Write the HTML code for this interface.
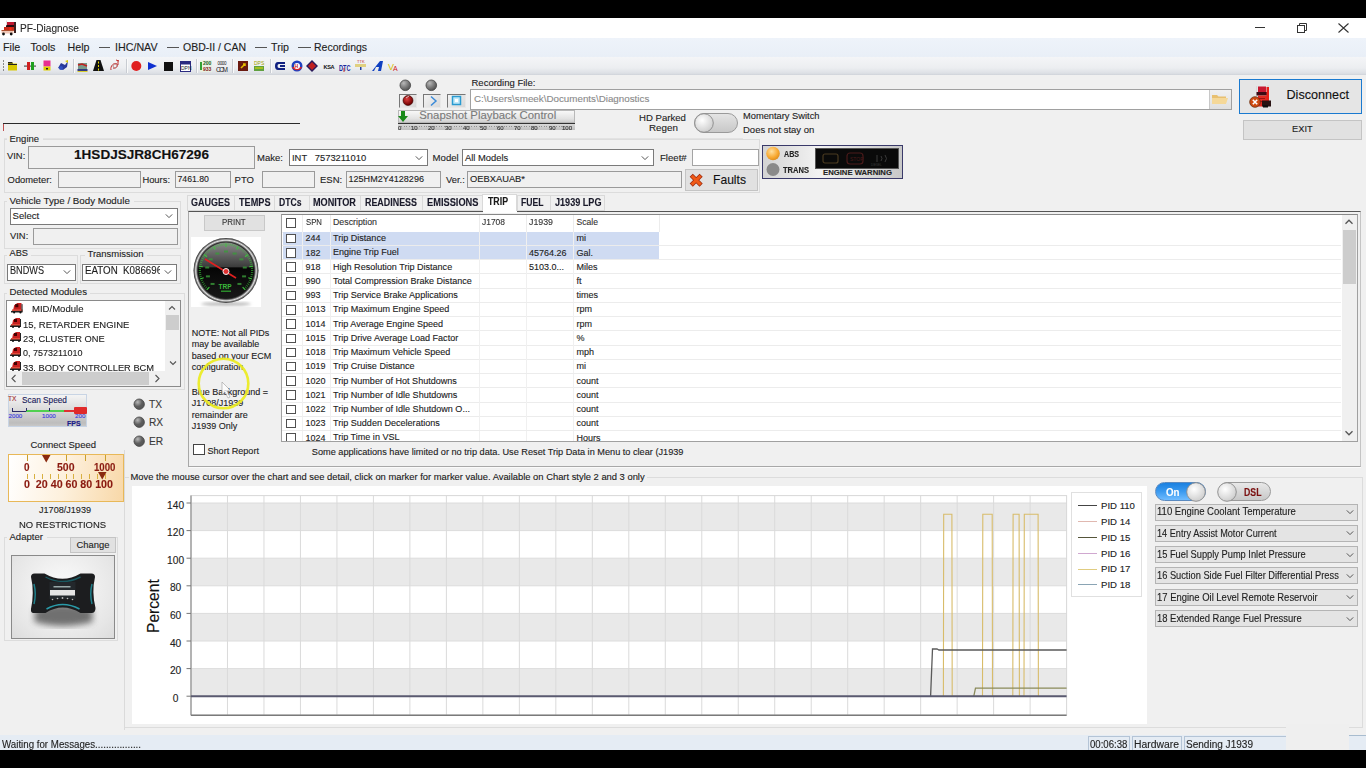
<!DOCTYPE html>
<html><head><meta charset="utf-8">
<style>
*{box-sizing:border-box;margin:0;padding:0}
html,body{width:1366px;height:768px;overflow:hidden;background:#000}
body{position:relative;font-family:"Liberation Sans",sans-serif;font-size:12px;color:#1e1e1e}
.a{position:absolute}
.t{position:absolute;white-space:pre;line-height:1;-webkit-text-stroke:0.12px currentColor}
svg.a{overflow:visible}
</style></head><body>

<div class="a" style="left:0px;top:18px;width:1366px;height:732px;background:#f0f0f0"></div>
<div class="a" style="left:0px;top:18px;width:1366px;height:20px;background:#fff"></div>
<svg class="a" style="left:0px;top:18px;" width="17" height="20" viewBox="0 0 17 20"><rect x="7" y="4" width="8" height="4" fill="#c01830"/><rect x="6" y="7" width="8.5" height="2" fill="#2a0a10"/><rect x="4" y="9" width="10" height="4" fill="#c82a18"/><rect x="9.5" y="9.5" width="2" height="3" fill="#ff2a10"/><rect x="14" y="4" width="2" height="11" fill="#3a2020"/><rect x="1.5" y="12.5" width="12" height="3" fill="#f0c8b8"/><rect x="1.5" y="12" width="12" height="1" fill="#b05030"/><circle cx="3.5" cy="16" r="1.4" fill="#111"/><circle cx="11.2" cy="16" r="1.4" fill="#111"/><rect x="6.3" y="2.5" width="0.6" height="5" fill="#ccc"/></svg>
<div class="t" style="left:19.50px;top:23.38px;font-size:10.89px;color:#2a2a2a;transform:scaleX(0.928);transform-origin:0 0;">PF-Diagnose</div>
<div class="a" style="left:1255px;top:27px;width:10px;height:1px;background:#333"></div>
<svg class="a" style="left:1296px;top:22px;" width="12" height="12" viewBox="0 0 12 12"><rect x="1.5" y="3.5" width="7" height="7" fill="none" stroke="#333"/><path d="M3.5 3.5 V1.5 H10.5 V8.5 H8.5" fill="none" stroke="#333"/></svg>
<svg class="a" style="left:1338px;top:22.5px;" width="11" height="10" viewBox="0 0 11 10"><path d="M0.5 0.5 L10.5 9.5 M10.5 0.5 L0.5 9.5" stroke="#333" stroke-width="1.1"/></svg>
<div class="a" style="left:0px;top:38px;width:1366px;height:19px;background:linear-gradient(#eef3fa,#e9eff7)"></div>
<div class="t" style="left:3.00px;top:41.94px;font-size:10.70px;">File</div>
<div class="t" style="left:30.50px;top:41.94px;font-size:10.70px;">Tools</div>
<div class="t" style="left:67.50px;top:41.94px;font-size:10.70px;">Help</div>
<div class="a" style="left:99px;top:47px;width:11px;height:1px;background:#555"></div>
<div class="a" style="left:167px;top:47px;width:12px;height:1px;background:#555"></div>
<div class="a" style="left:255px;top:47px;width:12px;height:1px;background:#555"></div>
<div class="a" style="left:298px;top:47px;width:13px;height:1px;background:#555"></div>
<div class="t" style="left:115.00px;top:41.94px;font-size:10.70px;">IHC/NAV</div>
<div class="t" style="left:183.00px;top:42.11px;font-size:10.50px;">OBD-II / CAN</div>
<div class="t" style="left:271.00px;top:41.94px;font-size:10.70px;">Trip</div>
<div class="t" style="left:314.00px;top:42.11px;font-size:10.50px;">Recordings</div>
<div class="a" style="left:0px;top:57px;width:1366px;height:18px;background:linear-gradient(#f4f5f7,#eceef1 60%,#dde0e5 90%,#cfd3d9)"></div>
<div class="a" style="left:3px;top:60px;width:1px;height:1.5px;background:#8a8a8a"></div>
<div class="a" style="left:3px;top:63px;width:1px;height:1.5px;background:#8a8a8a"></div>
<div class="a" style="left:3px;top:66px;width:1px;height:1.5px;background:#8a8a8a"></div>
<div class="a" style="left:3px;top:69px;width:1px;height:1.5px;background:#8a8a8a"></div>
<div class="a" style="left:72.5px;top:59px;width:1px;height:14px;background:#c8ccd2"></div>
<div class="a" style="left:73.5px;top:59px;width:1px;height:14px;background:#fafafa"></div>
<div class="a" style="left:125.5px;top:59px;width:1px;height:14px;background:#c8ccd2"></div>
<div class="a" style="left:126.5px;top:59px;width:1px;height:14px;background:#fafafa"></div>
<div class="a" style="left:195.5px;top:59px;width:1px;height:14px;background:#c8ccd2"></div>
<div class="a" style="left:196.5px;top:59px;width:1px;height:14px;background:#fafafa"></div>
<div class="a" style="left:232px;top:59px;width:1px;height:14px;background:#c8ccd2"></div>
<div class="a" style="left:233px;top:59px;width:1px;height:14px;background:#fafafa"></div>
<div class="a" style="left:270px;top:59px;width:1px;height:14px;background:#c8ccd2"></div>
<div class="a" style="left:271px;top:59px;width:1px;height:14px;background:#fafafa"></div>
<svg class="a" style="left:8px;top:61px;" width="10" height="10" viewBox="0 0 10 10"><path d="M0 1 H4 L5 2.5 H9 V9.5 H0Z" fill="#d8c800"/><path d="M0 3 H9 V4 H0Z" fill="#222"/><path d="M0 1 H4 L5 2.5 H0Z" fill="#222"/></svg>
<svg class="a" style="left:23.5px;top:61px;" width="12" height="10" viewBox="0 0 12 10"><rect x="0" y="4.5" width="12" height="1.2" fill="#555"/><rect x="3" y="1" width="3" height="8" fill="#d02020"/><rect x="7" y="1" width="3" height="8" fill="#20a020"/></svg>
<svg class="a" style="left:42.5px;top:60px;" width="8" height="11" viewBox="0 0 8 11"><rect x="0.5" y="0.5" width="7" height="6" fill="#e83090"/><rect x="0.5" y="6.5" width="7" height="4" fill="#e0d000"/><rect x="3" y="8" width="2" height="1.5" fill="#222"/></svg>
<svg class="a" style="left:56.5px;top:60px;" width="12" height="11" viewBox="0 0 12 11"><path d="M1 8 L4 3 L8 5 L11 1 L10 7 L6 10 Z" fill="#2a3a9a"/><path d="M8 1 L11 0 L11 3Z" fill="#d8c800"/><circle cx="4" cy="8" r="2" fill="#3050c0"/></svg>
<svg class="a" style="left:77px;top:60px;" width="11" height="12" viewBox="0 0 11 12"><rect x="1" y="3" width="9" height="6" fill="#7a9a8a"/><path d="M1 5 L5 4 L10 6" stroke="#c02020" stroke-width="1.5" fill="none"/><rect x="0.5" y="9" width="10" height="2" fill="#333a80"/><rect x="0.5" y="11" width="10" height="0.8" fill="#d8c800"/></svg>
<svg class="a" style="left:93px;top:60px;" width="11" height="11" viewBox="0 0 11 11"><path d="M3.5 0 H7.5 L11 11 H0Z" fill="#111"/><rect x="5" y="1.5" width="1" height="2" fill="#e8d800"/><rect x="5" y="5" width="1" height="2" fill="#e8d800"/><rect x="5" y="8.5" width="1" height="2" fill="#e8d800"/></svg>
<svg class="a" style="left:109px;top:60px;" width="12" height="12" viewBox="0 0 12 12"><path d="M2 10 C1 6 5 2 8 4 C10 6 6 9 4 8 M7 0 L10 1 M9 0 V5" stroke="#c03030" stroke-width="1" fill="none"/><circle cx="6" cy="6" r="2" fill="none" stroke="#c08080"/></svg>
<svg class="a" style="left:131px;top:61px;" width="11" height="11" viewBox="0 0 11 11"><circle cx="5.3" cy="5" r="5" fill="#e02020"/></svg>
<svg class="a" style="left:148px;top:61px;" width="10" height="10" viewBox="0 0 10 10"><path d="M0 1 L9 5 L0 9Z" fill="#1030d0"/></svg>
<div class="a" style="left:164px;top:62px;width:9px;height:9px;background:#111"></div>
<svg class="a" style="left:180px;top:60px;" width="11" height="12" viewBox="0 0 11 12"><rect x="0.5" y="1.5" width="10" height="10" fill="#fff" stroke="#2a2a80"/><rect x="0.5" y="1.5" width="10" height="3" fill="#2a2a80"/><text x="1" y="10" font-size="5" fill="#222" font-family="Liberation Sans">DPN</text></svg>
<svg class="a" style="left:199.5px;top:60px;" width="12" height="12" viewBox="0 0 12 12"><rect x="0" y="0" width="12" height="12" fill="#e8f0e0"/><text x="3" y="5" font-size="5" fill="#206020" font-family="Liberation Sans" font-weight="bold">200</text><text x="3" y="11" font-size="5" fill="#802020" font-family="Liberation Sans" font-weight="bold">933</text><path d="M1 2 V10" stroke="#30a030" stroke-width="2"/></svg>
<svg class="a" style="left:216px;top:60px;" width="12" height="12" viewBox="0 0 12 12"><text x="1.5" y="5" font-size="4.5" fill="#222" font-family="Liberation Sans" textLength="9">0000</text><text x="0" y="11.5" font-size="6.5" fill="#222" font-family="Liberation Sans" textLength="12">CCM</text></svg>
<svg class="a" style="left:238px;top:61px;" width="10" height="10" viewBox="0 0 10 10"><rect width="10" height="10" fill="#6a1a10"/><path d="M3 7 L7 3 M5 3 H7 V5" stroke="#e8c000" stroke-width="1.5" fill="none"/></svg>
<svg class="a" style="left:254px;top:60px;" width="10" height="12" viewBox="0 0 10 12"><text x="0" y="5" font-size="5" fill="#a0a000" font-family="Liberation Sans">DPS</text><rect x="0" y="6" width="10" height="5" fill="#60a040"/><path d="M1 8 H9" stroke="#e8e000"/></svg>
<svg class="a" style="left:274px;top:60px;" width="12" height="12" viewBox="0 0 12 12"><path d="M11 2 H4 Q1 2 1 6 Q1 10 4 10 H11 V8 H5 Q3.5 8 3.5 6 Q3.5 4 5 4 H11Z" fill="#102080"/><rect x="6" y="5" width="5" height="2" fill="#102080"/></svg>
<svg class="a" style="left:291px;top:60px;" width="12" height="12" viewBox="0 0 12 12"><circle cx="6" cy="6" r="5.5" fill="#2040c0"/><path d="M1 7 A5.5 5.5 0 0 0 11 7 Z" fill="#e02020"/><circle cx="6" cy="6" r="3" fill="#fff"/><text x="3.5" y="8" font-size="5" fill="#c02020" font-family="Liberation Sans" font-weight="bold">H</text></svg>
<svg class="a" style="left:306px;top:60px;" width="12" height="12" viewBox="0 0 12 12"><path d="M6 0 L12 6 L6 12 L0 6Z" fill="#2a1a5a"/><path d="M6 2 L10 6 L6 10 L2 6Z" fill="#c02020"/></svg>
<svg class="a" style="left:323px;top:60px;" width="12" height="12" viewBox="0 0 12 12"><text x="0.5" y="8.5" font-size="5.6" fill="#111" font-family="Liberation Sans" font-weight="bold" textLength="11">KSA</text></svg>
<svg class="a" style="left:339px;top:60px;" width="12" height="12" viewBox="0 0 12 12"><text x="0" y="10.5" font-size="9.5" fill="#1a2aa0" font-family="Liberation Sans" font-weight="bold" textLength="11.5" lengthAdjust="spacingAndGlyphs">DTC</text><rect x="4.5" y="8" width="1" height="4" fill="#c03030"/></svg>
<svg class="a" style="left:355px;top:59px;" width="12" height="13" viewBox="0 0 12 13"><text x="2" y="4" font-size="4" fill="#c03030" font-family="Liberation Sans">TTK</text><rect x="0" y="5" width="11" height="3" fill="#e0d080"/><rect x="5" y="8" width="1.5" height="3" fill="#2040a0"/></svg>
<svg class="a" style="left:372px;top:60px;" width="12" height="12" viewBox="0 0 12 12"><path d="M0 11 L8 1 H11 L9 11 H6 L7 7 H4 L2 11Z" fill="#1040c0"/></svg>
<svg class="a" style="left:388px;top:60px;" width="12" height="12" viewBox="0 0 12 12"><text x="0" y="10" font-size="9" fill="#d8c000" font-family="Liberation Sans">V</text><text x="5" y="11" font-size="7" fill="#d02020" font-family="Liberation Sans">A</text></svg>
<svg class="a" style="left:399.3px;top:79.1px;" width="12.6" height="12.6" viewBox="0 0 12.6 12.6"><defs><radialGradient id="lg405_85" cx="35%" cy="30%" r="70%"><stop offset="0" stop-color="#b8b8b8"/><stop offset="0.6" stop-color="#7a7a7a"/><stop offset="1" stop-color="#555"/></radialGradient></defs><circle cx="6.3" cy="6.3" r="5.3" fill="url(#lg405_85)" stroke="#444" stroke-width="0.8"/></svg>
<svg class="a" style="left:424.7px;top:79.1px;" width="12.6" height="12.6" viewBox="0 0 12.6 12.6"><defs><radialGradient id="lg431_85" cx="35%" cy="30%" r="70%"><stop offset="0" stop-color="#b8b8b8"/><stop offset="0.6" stop-color="#7a7a7a"/><stop offset="1" stop-color="#555"/></radialGradient></defs><circle cx="6.3" cy="6.3" r="5.3" fill="url(#lg431_85)" stroke="#444" stroke-width="0.8"/></svg>
<div class="a" style="left:398.5px;top:94px;width:18.5px;height:13.5px;background:linear-gradient(135deg,#f4f4f4,#d8d8d8);border-left:1px solid #777;border-top:1px solid #777;border-right:1px solid #e8e8e8;border-bottom:1px solid #e8e8e8"></div>
<div class="a" style="left:423px;top:94px;width:18px;height:13.5px;background:linear-gradient(135deg,#f4f4f4,#d8d8d8);border-left:1px solid #777;border-top:1px solid #777;border-right:1px solid #e8e8e8;border-bottom:1px solid #e8e8e8"></div>
<div class="a" style="left:447px;top:94px;width:19px;height:13.5px;background:linear-gradient(135deg,#f4f4f4,#d8d8d8);border-left:1px solid #777;border-top:1px solid #777;border-right:1px solid #e8e8e8;border-bottom:1px solid #e8e8e8"></div>
<svg class="a" style="left:402px;top:94px;" width="12" height="12" viewBox="0 0 12 12"><defs><radialGradient id="rb" cx="40%" cy="35%" r="60%"><stop offset="0" stop-color="#e04040"/><stop offset="1" stop-color="#700000"/></radialGradient></defs><circle cx="6" cy="6.5" r="5" fill="url(#rb)" stroke="#300" stroke-width="0.6"/><path d="M4 4 L7 2" stroke="#ddd" stroke-width="0.8"/></svg>
<svg class="a" style="left:428px;top:95px;" width="12" height="12" viewBox="0 0 12 12"><polyline points="3,1.5 8,6 3,10.5" fill="none" stroke="#3a8ad8" stroke-width="1.5"/></svg>
<svg class="a" style="left:451px;top:95px;" width="12" height="12" viewBox="0 0 12 12"><rect x="1.5" y="1.5" width="8" height="8" fill="#bfe8f8" stroke="#2a9ad0" stroke-width="1.5"/><rect x="4" y="4" width="3" height="3" fill="#fff"/></svg>
<div class="t" style="left:471.50px;top:78.16px;font-size:9.50px;">Recording File:</div>
<div class="a" style="left:470px;top:88.5px;width:762px;height:21px;background:#fff;border:1px solid #a0a0a0"></div>
<div class="t" style="left:474.00px;top:94.10px;font-size:9.80px;color:#8a8a8a;">C:\Users\smeek\Documents\Diagnostics</div>
<div class="a" style="left:1209px;top:89.5px;width:22px;height:19px;background:linear-gradient(#f0f0f0,#e0e0e0);border-left:1px solid #c8c8c8"></div>
<svg class="a" style="left:1211px;top:92px;" width="18" height="14" viewBox="0 0 18 14"><path d="M1 3 H6 L7.5 4.5 H15 V12 H1Z" fill="#e8c070"/><path d="M1 6 H17 L15 12 H1Z" fill="#f5d898"/></svg>
<div class="a" style="left:397.5px;top:110px;width:177.5px;height:13px;background:linear-gradient(#f8f8f8,#e2e2e2 70%,#cfcfcf);border:1px solid #b8b8b8"></div>
<div class="t" style="left:419.20px;top:110.09px;font-size:11.36px;color:#7a7a7a;">Snapshot Playback Control</div>
<svg class="a" style="left:398px;top:111px;" width="11" height="12" viewBox="0 0 11 12"><path d="M3 0 H7 V5 H10 L5 11 L0 5 H3Z" fill="#1a8a1a"/></svg>
<div class="a" style="left:397.5px;top:123px;width:177.5px;height:1px;background:#333"></div>
<div class="a" style="left:397.5px;top:124px;width:177.5px;height:6px;background:linear-gradient(#d8d8d8,#c0c0c0)"></div>
<div class="t" style="left:398.03px;top:125.22px;font-size:6.01px;color:#333;transform:scaleX(0.999);transform-origin:0 0;">0</div>
<div class="t" style="left:411.06px;top:125.22px;font-size:6.01px;color:#333;transform:scaleX(0.999);transform-origin:0 0;">10</div>
<div class="t" style="left:428.26px;top:125.22px;font-size:6.01px;color:#333;transform:scaleX(0.999);transform-origin:0 0;">20</div>
<div class="t" style="left:445.46px;top:125.22px;font-size:6.01px;color:#333;transform:scaleX(0.999);transform-origin:0 0;">30</div>
<div class="t" style="left:462.66px;top:125.22px;font-size:6.01px;color:#333;transform:scaleX(0.999);transform-origin:0 0;">40</div>
<div class="t" style="left:479.86px;top:125.22px;font-size:6.01px;color:#333;transform:scaleX(0.999);transform-origin:0 0;">50</div>
<div class="t" style="left:497.06px;top:125.22px;font-size:6.01px;color:#333;transform:scaleX(0.999);transform-origin:0 0;">60</div>
<div class="t" style="left:514.26px;top:125.22px;font-size:6.01px;color:#333;transform:scaleX(0.999);transform-origin:0 0;">70</div>
<div class="t" style="left:531.46px;top:125.22px;font-size:6.01px;color:#333;transform:scaleX(0.999);transform-origin:0 0;">80</div>
<div class="t" style="left:548.66px;top:125.22px;font-size:6.01px;color:#333;transform:scaleX(0.999);transform-origin:0 0;">90</div>
<div class="t" style="left:562.00px;top:125.22px;font-size:6.01px;color:#333;transform:scaleX(0.999);transform-origin:0 0;">100</div>
<div class="a" style="left:399px;top:125.5px;width:175px;height:1px;background:repeating-linear-gradient(90deg,#666 0 1px,transparent 1px 2.5px);opacity:0.6"></div>
<div class="t" style="left:639.00px;top:113.47px;font-size:9.60px;">HD Parked</div>
<div class="t" style="left:649.00px;top:123.30px;font-size:9.80px;">Regen</div>
<div class="a" style="left:694px;top:113px;width:44px;height:20px;background:linear-gradient(#e4e4e4,#c8c8c8);border:1px solid #9a9a9a;border-radius:10px"></div>
<svg class="a" style="left:693.5px;top:112.5px;" width="20" height="20" viewBox="0 0 20 20"><defs><radialGradient id="kb" cx="40%" cy="35%" r="65%"><stop offset="0" stop-color="#ffffff"/><stop offset="1" stop-color="#cfcfcf"/></radialGradient></defs><circle cx="10" cy="10" r="9.3" fill="url(#kb)" stroke="#8a8a8a" stroke-width="0.9"/></svg>
<div class="t" style="left:743.00px;top:112.33px;font-size:9.30px;">Momentary Switch</div>
<div class="t" style="left:743.00px;top:124.86px;font-size:9.50px;">Does not stay on</div>
<div class="a" style="left:3.5px;top:138px;width:739px;height:1px;background:#e2e2e2"></div>
<div class="a" style="left:1239px;top:78.5px;width:123px;height:35.5px;background:#e5e5e5;border:1.5px solid #1a7ad0"></div>
<svg class="a" style="left:1249px;top:84px;" width="24" height="25" viewBox="0 0 24 25"><rect x="7" y="2" width="1" height="11" fill="#d8d8d8"/><rect x="18.5" y="1" width="1" height="17" fill="#d0d0d0"/><rect x="9" y="2.5" width="8" height="6" fill="#c81830"/><rect x="7.5" y="8" width="11" height="3.5" fill="#3a0a14"/><rect x="9" y="11.5" width="9" height="11" fill="#e02a20"/><rect x="10" y="14" width="6" height="1" fill="#a01010"/><rect x="10" y="17" width="6" height="1" fill="#a01010"/><rect x="17.5" y="3" width="2.5" height="15" fill="#e82018"/><rect x="13" y="16.5" width="9" height="6" fill="#2a1414"/><rect x="14" y="21" width="5" height="2.5" fill="#111"/><circle cx="6" cy="18" r="5.3" fill="#d04a10" stroke="#6a3010" stroke-width="0.8"/><path d="M3.8 15.8 L8.2 20.2 M8.2 15.8 L3.8 20.2" stroke="#fff" stroke-width="1.6"/></svg>
<div class="t" style="left:1286.50px;top:88.81px;font-size:12.63px;color:#111;">Disconnect</div>
<div class="a" style="left:1243px;top:119.5px;width:119px;height:20px;background:#e1e1e1;border:1px solid #c4c4c4"></div>
<div class="t" style="left:1292.00px;top:125.13px;font-size:9.30px;">EXIT</div>
<div class="a" style="left:3px;top:123px;width:297px;height:1.3px;background:#2a2a2a"></div>
<div class="a" style="left:3px;top:124px;width:1px;height:7px;background:#c05050"></div>
<div class="a" style="left:3.5px;top:138.5px;width:756.5px;height:54px;border:1px solid #dcdcdc"></div>
<div class="a" style="left:7px;top:134px;width:36px;height:8px;background:#f0f0f0"></div>
<div class="t" style="left:9.50px;top:133.56px;font-size:9.50px;">Engine</div>
<div class="t" style="left:7.00px;top:150.64px;font-size:9.40px;">VIN:</div>
<div class="a" style="left:27.5px;top:145.5px;width:227.5px;height:23px;background:#f0f0f0;border:1px solid #9a9a9a"></div>
<div class="t" style="left:74.00px;top:148.31px;font-size:13.57px;font-weight:bold;color:#111;">1HSDJSJR8CH67296</div>
<div class="t" style="left:257.00px;top:153.46px;font-size:9.50px;">Make:</div>
<div class="a" style="left:289px;top:149.4px;width:138.6px;height:17px;background:#fff;border:1px solid #7a7a7a"></div>
<svg class="a" style="left:413.6px;top:153.9px;" width="10" height="8" viewBox="0 0 10 8"><polyline points="1.8,2.4 5,5.6 8.2,2.4" fill="none" stroke="#555" stroke-width="1"/></svg>
<div class="t" style="left:292.00px;top:153.04px;font-size:9.40px;">INT   7573211010</div>
<div class="t" style="left:432.60px;top:153.37px;font-size:9.60px;">Model</div>
<div class="a" style="left:462px;top:149.4px;width:192.4px;height:17px;background:#fff;border:1px solid #7a7a7a"></div>
<svg class="a" style="left:640.4px;top:153.9px;" width="10" height="8" viewBox="0 0 10 8"><polyline points="1.8,2.4 5,5.6 8.2,2.4" fill="none" stroke="#555" stroke-width="1"/></svg>
<div class="t" style="left:465.00px;top:153.04px;font-size:9.40px;">All Models</div>
<div class="t" style="left:660.00px;top:153.37px;font-size:9.60px;">Fleet#</div>
<div class="a" style="left:691.5px;top:149.4px;width:67px;height:17px;background:#fff;border:1px solid #a4a4a4"></div>
<div class="t" style="left:7.60px;top:174.74px;font-size:9.40px;">Odometer:</div>
<div class="a" style="left:58px;top:171px;width:83px;height:17px;background:#f0f0f0;border:1px solid #9a9a9a"></div>
<div class="t" style="left:142.40px;top:175.04px;font-size:9.40px;">Hours:</div>
<div class="a" style="left:175px;top:170.5px;width:56px;height:17px;background:#f0f0f0;border:1px solid #9a9a9a"></div>
<div class="t" style="left:177.50px;top:175.12px;font-size:8.71px;">7461.80</div>
<div class="t" style="left:234.60px;top:174.96px;font-size:9.50px;">PTO</div>
<div class="a" style="left:262px;top:170.5px;width:52.5px;height:17px;background:#f0f0f0;border:1px solid #9a9a9a"></div>
<div class="t" style="left:320.00px;top:174.96px;font-size:9.50px;">ESN:</div>
<div class="a" style="left:346px;top:170.5px;width:94.5px;height:17px;background:#f0f0f0;border:1px solid #9a9a9a"></div>
<div class="t" style="left:348.50px;top:174.84px;font-size:9.05px;">125HM2Y4128296</div>
<div class="t" style="left:446.00px;top:175.04px;font-size:9.40px;">Ver.:</div>
<div class="a" style="left:466.5px;top:170.5px;width:215px;height:17px;background:#f0f0f0;border:1px solid #9a9a9a"></div>
<div class="t" style="left:470.00px;top:174.60px;font-size:9.34px;">OEBXAUAB*</div>
<div class="a" style="left:685px;top:168.5px;width:73px;height:22.5px;background:#e1e1e1;border:1px solid #c4c4c4"></div>
<svg class="a" style="left:688px;top:172px;" width="16" height="16" viewBox="0 0 16 16"><path d="M4.8 4.8 L11.6 11.6 M11.6 4.8 L4.8 11.6" stroke="#9a2a10" stroke-width="4.4" stroke-linecap="square"/><path d="M4.8 4.8 L11.6 11.6 M11.6 4.8 L4.8 11.6" stroke="#f05a18" stroke-width="3" stroke-linecap="square"/></svg>
<div class="t" style="left:713.00px;top:173.94px;font-size:12.12px;color:#111;">Faults</div>
<div class="a" style="left:762px;top:144.5px;width:140.5px;height:34px;background:linear-gradient(90deg,#d4d4d4,#f2f2f2 40%,#c8c8c8);border:1.5px solid #3a3a6a"></div>
<svg class="a" style="left:765px;top:146px;" width="16" height="16" viewBox="0 0 16 16"><defs><radialGradient id="og" cx="40%" cy="35%" r="65%"><stop offset="0" stop-color="#ffe0a0"/><stop offset="0.7" stop-color="#f8a830"/><stop offset="1" stop-color="#e09020"/></radialGradient></defs><circle cx="8" cy="7.5" r="6.8" fill="url(#og)"/></svg>
<svg class="a" style="left:765px;top:162px;" width="16" height="16" viewBox="0 0 16 16"><circle cx="8" cy="7.5" r="6.5" fill="#8a8a8a"/></svg>
<div class="t" style="left:784.00px;top:150.07px;font-size:8.66px;font-weight:bold;color:#222;transform:scaleX(0.820);transform-origin:0 0;">ABS</div>
<div class="t" style="left:783.00px;top:165.97px;font-size:8.66px;font-weight:bold;color:#222;transform:scaleX(0.872);transform-origin:0 0;">TRANS</div>
<div class="a" style="left:815px;top:147.5px;width:84px;height:21px;background:#0a0a0a;border:1px solid #555"></div>
<svg class="a" style="left:815px;top:147.5px;" width="84" height="21" viewBox="0 0 84 21"><rect x="8" y="6" width="15" height="9" rx="2" fill="none" stroke="#4a3a20" stroke-width="1.2"/><rect x="32" y="5" width="16" height="11" rx="3" fill="none" stroke="#4a1a1a" stroke-width="1.2"/><text x="35" y="13" font-size="5" fill="#4a1a1a" font-family="Liberation Sans">STOP</text><path d="M62 7 V14 M66 8 Q68 10.5 66 13 M70 7 Q73 10.5 70 14" stroke="#3a3a3a" fill="none"/><text x="56" y="18" font-size="3" fill="#3a3a3a" font-family="Liberation Sans">DIESEL</text></svg>
<div class="t" style="left:823.00px;top:169.47px;font-size:7.71px;font-weight:bold;color:#222;">ENGINE WARNING</div>
<div class="a" style="left:3.5px;top:201px;width:177px;height:48px;border:1px solid #dcdcdc"></div>
<div class="a" style="left:7px;top:196px;width:127px;height:8px;background:#f0f0f0"></div>
<div class="t" style="left:9.50px;top:196.02px;font-size:9.78px;">Vehicle Type / Body Module</div>
<div class="a" style="left:10px;top:207.5px;width:168px;height:17px;background:#fff;border:1px solid #7a7a7a"></div>
<svg class="a" style="left:164px;top:212px;" width="10" height="8" viewBox="0 0 10 8"><polyline points="1.8,2.4 5,5.6 8.2,2.4" fill="none" stroke="#555" stroke-width="1"/></svg>
<div class="t" style="left:12.60px;top:210.57px;font-size:9.60px;">Select</div>
<div class="t" style="left:10.00px;top:231.44px;font-size:9.40px;">VIN:</div>
<div class="a" style="left:33px;top:227.5px;width:145px;height:17.5px;background:#f0f0f0;border:1px solid #9a9a9a"></div>
<div class="a" style="left:3.5px;top:254.5px;width:74px;height:29px;border:1px solid #dcdcdc"></div>
<div class="a" style="left:7px;top:250px;width:24px;height:8px;background:#f0f0f0"></div>
<div class="t" style="left:9.50px;top:249.47px;font-size:9.25px;">ABS</div>
<div class="a" style="left:80px;top:254.5px;width:100.5px;height:29px;border:1px solid #dcdcdc"></div>
<div class="a" style="left:85px;top:250px;width:62px;height:8px;background:#f0f0f0"></div>
<div class="t" style="left:87.50px;top:249.28px;font-size:9.48px;">Transmission</div>
<div class="a" style="left:7px;top:263.5px;width:68.5px;height:17px;background:#fff;border:1px solid #7a7a7a"></div>
<svg class="a" style="left:61.5px;top:268px;" width="10" height="8" viewBox="0 0 10 8"><polyline points="1.8,2.4 5,5.6 8.2,2.4" fill="none" stroke="#555" stroke-width="1"/></svg>
<div class="t" style="left:9.50px;top:265.85px;font-size:10.34px;transform:scaleX(0.884);transform-origin:0 0;">BNDWS</div>
<div class="a" style="left:82px;top:263.5px;width:94.5px;height:17px;background:#fff;border:1px solid #7a7a7a"></div>
<svg class="a" style="left:162.5px;top:268px;" width="10" height="8" viewBox="0 0 10 8"><polyline points="1.8,2.4 5,5.6 8.2,2.4" fill="none" stroke="#555" stroke-width="1"/></svg>
<div class="a" style="left:83px;top:264.5px;width:77px;height:15px;overflow:hidden">
<div class="t" style="left:1.80px;top:1.35px;font-size:10.34px;transform:scaleX(0.944);transform-origin:0 0;">EATON  K0866960</div>
</div>
<div class="a" style="left:3.5px;top:292.5px;width:181.5px;height:97px;border:1px solid #dcdcdc"></div>
<div class="a" style="left:7px;top:288px;width:83px;height:8px;background:#f0f0f0"></div>
<div class="t" style="left:9.50px;top:286.76px;font-size:9.62px;">Detected Modules</div>
<div class="a" style="left:6px;top:299.5px;width:175px;height:87px;background:#fff;border:1px solid #8a8a8a"></div>
<svg class="a" style="left:11px;top:302px;" width="12.6" height="11.55" viewBox="0 0 12.6 11.55"><g transform="scale(1.05)"><path d="M3 3 L6 1 H10 V8 H2 Z" fill="#c82020"/><rect x="4" y="2" width="3" height="3" fill="#400"/><rect x="1" y="7" width="10" height="2" fill="#e04a3a"/><rect x="0" y="8.5" width="11" height="1.5" fill="#222"/><circle cx="3" cy="10" r="1" fill="#111"/><circle cx="9" cy="10" r="1" fill="#111"/><rect x="10" y="2" width="1" height="7" fill="#222"/></g></svg>
<div class="t" style="left:31.50px;top:304.02px;font-size:9.78px;transform:scaleX(0.977);transform-origin:0 0;">MID/Module</div>
<svg class="a" style="left:10px;top:317.2px;" width="12" height="11" viewBox="0 0 12 11"><g transform="scale(1)"><path d="M3 3 L6 1 H10 V8 H2 Z" fill="#c82020"/><rect x="4" y="2" width="3" height="3" fill="#400"/><rect x="1" y="7" width="10" height="2" fill="#e04a3a"/><rect x="0" y="8.5" width="11" height="1.5" fill="#222"/><circle cx="3" cy="10" r="1" fill="#111"/><circle cx="9" cy="10" r="1" fill="#111"/><rect x="10" y="2" width="1" height="7" fill="#222"/></g></svg>
<div class="t" style="left:22.50px;top:319.92px;font-size:9.78px;transform:scaleX(0.972);transform-origin:0 0;">15, RETARDER ENGINE</div>
<svg class="a" style="left:10px;top:331.4px;" width="12" height="11" viewBox="0 0 12 11"><g transform="scale(1)"><path d="M3 3 L6 1 H10 V8 H2 Z" fill="#c82020"/><rect x="4" y="2" width="3" height="3" fill="#400"/><rect x="1" y="7" width="10" height="2" fill="#e04a3a"/><rect x="0" y="8.5" width="11" height="1.5" fill="#222"/><circle cx="3" cy="10" r="1" fill="#111"/><circle cx="9" cy="10" r="1" fill="#111"/><rect x="10" y="2" width="1" height="7" fill="#222"/></g></svg>
<div class="t" style="left:22.50px;top:334.12px;font-size:9.78px;transform:scaleX(0.953);transform-origin:0 0;">23, CLUSTER ONE</div>
<svg class="a" style="left:10px;top:345.6px;" width="12" height="11" viewBox="0 0 12 11"><g transform="scale(1)"><path d="M3 3 L6 1 H10 V8 H2 Z" fill="#c82020"/><rect x="4" y="2" width="3" height="3" fill="#400"/><rect x="1" y="7" width="10" height="2" fill="#e04a3a"/><rect x="0" y="8.5" width="11" height="1.5" fill="#222"/><circle cx="3" cy="10" r="1" fill="#111"/><circle cx="9" cy="10" r="1" fill="#111"/><rect x="10" y="2" width="1" height="7" fill="#222"/></g></svg>
<div class="t" style="left:22.50px;top:348.32px;font-size:9.78px;transform:scaleX(0.922);transform-origin:0 0;">0, 7573211010</div>
<svg class="a" style="left:10px;top:359.8px;" width="12" height="11" viewBox="0 0 12 11"><g transform="scale(1)"><path d="M3 3 L6 1 H10 V8 H2 Z" fill="#c82020"/><rect x="4" y="2" width="3" height="3" fill="#400"/><rect x="1" y="7" width="10" height="2" fill="#e04a3a"/><rect x="0" y="8.5" width="11" height="1.5" fill="#222"/><circle cx="3" cy="10" r="1" fill="#111"/><circle cx="9" cy="10" r="1" fill="#111"/><rect x="10" y="2" width="1" height="7" fill="#222"/></g></svg>
<div class="t" style="left:22.50px;top:362.52px;font-size:9.78px;transform:scaleX(0.952);transform-origin:0 0;">33, BODY CONTROLLER BCM</div>
<div class="a" style="left:7px;top:370.5px;width:173px;height:15.5px;background:#fff"></div>
<div class="a" style="left:165px;top:300.5px;width:15px;height:70px;background:#f0f0f0"></div>
<div class="a" style="left:165.5px;top:315px;width:13.5px;height:15px;background:#cdcdcd"></div>
<svg class="a" style="left:167px;top:304px;" width="10" height="8" viewBox="0 0 10 8"><polyline points="2,5.5 5,2.5 8,5.5" fill="none" stroke="#555" stroke-width="1.1"/></svg>
<svg class="a" style="left:167.5px;top:359px;" width="10" height="8" viewBox="0 0 10 8"><polyline points="2,2.5 5,5.5 8,2.5" fill="none" stroke="#555" stroke-width="1.1"/></svg>
<div class="a" style="left:7px;top:370.5px;width:173px;height:15px;background:#f0f0f0"></div>
<div class="a" style="left:22px;top:371.5px;width:127px;height:13px;background:#cdcdcd"></div>
<svg class="a" style="left:10px;top:374px;" width="8" height="9" viewBox="0 0 8 9"><polyline points="5.5,1 2,4.5 5.5,8" fill="none" stroke="#555" stroke-width="1.1"/></svg>
<svg class="a" style="left:153px;top:374px;" width="8" height="9" viewBox="0 0 8 9"><polyline points="2.5,1 6,4.5 2.5,8" fill="none" stroke="#555" stroke-width="1.1"/></svg>
<div class="a" style="left:7.5px;top:394px;width:79.5px;height:33px;background:linear-gradient(#f4f4f4,#dcdcdc 45%,#bdbdbd 90%,#c8c8c8);border:1px solid #c8d4e4"></div>
<div class="t" style="left:8.00px;top:396.00px;font-size:6.50px;color:#a03030;">TX</div>
<div class="t" style="left:22.00px;top:396.51px;font-size:8.26px;color:#1a1a5a;">Scan Speed</div>
<div class="a" style="left:12px;top:410.5px;width:14px;height:1px;background:#2a2a6a"></div>
<div class="a" style="left:12px;top:408px;width:1px;height:3px;background:#2a2a6a"></div>
<div class="a" style="left:26px;top:410px;width:38px;height:2px;background:#50d050"></div>
<div class="a" style="left:64px;top:410px;width:12px;height:2px;background:#e03030"></div>
<div class="a" style="left:74px;top:407px;width:13px;height:7px;background:#e02a2a;border-radius:1px"></div>
<div class="a" style="left:26px;top:408px;width:1px;height:3px;background:#2a2a6a"></div>
<div class="a" style="left:49px;top:408px;width:1px;height:3px;background:#2a2a6a"></div>
<div class="t" style="left:8.50px;top:412.75px;font-size:6.20px;color:#3a3ae0;">2000</div>
<div class="t" style="left:42.00px;top:412.75px;font-size:6.20px;color:#3a3ae0;">1000</div>
<div class="t" style="left:75.00px;top:412.75px;font-size:6.20px;color:#3a3ae0;">200</div>
<div class="t" style="left:67.00px;top:419.57px;font-size:7.00px;font-weight:bold;color:#1a1a8a;">FPS</div>
<div class="a" style="left:67px;top:420px;width:18px;height:6px;background:transparent"></div>
<svg class="a" style="left:133.3px;top:397.8px;" width="12.4" height="12.4" viewBox="0 0 12.4 12.4"><defs><radialGradient id="lg139_404" cx="35%" cy="30%" r="70%"><stop offset="0" stop-color="#b8b8b8"/><stop offset="0.6" stop-color="#5e5e5e"/><stop offset="1" stop-color="#555"/></radialGradient></defs><circle cx="6.2" cy="6.2" r="5.2" fill="url(#lg139_404)" stroke="#444" stroke-width="0.8"/></svg>
<div class="t" style="left:149.00px;top:399.57px;font-size:10.20px;color:#3a3a3a;">TX</div>
<svg class="a" style="left:133.3px;top:416.3px;" width="12.4" height="12.4" viewBox="0 0 12.4 12.4"><defs><radialGradient id="lg139_422" cx="35%" cy="30%" r="70%"><stop offset="0" stop-color="#b8b8b8"/><stop offset="0.6" stop-color="#5e5e5e"/><stop offset="1" stop-color="#555"/></radialGradient></defs><circle cx="6.2" cy="6.2" r="5.2" fill="url(#lg139_422)" stroke="#444" stroke-width="0.8"/></svg>
<div class="t" style="left:149.00px;top:418.07px;font-size:10.20px;color:#3a3a3a;">RX</div>
<svg class="a" style="left:133.3px;top:434.8px;" width="12.4" height="12.4" viewBox="0 0 12.4 12.4"><defs><radialGradient id="lg139_441" cx="35%" cy="30%" r="70%"><stop offset="0" stop-color="#b8b8b8"/><stop offset="0.6" stop-color="#5e5e5e"/><stop offset="1" stop-color="#555"/></radialGradient></defs><circle cx="6.2" cy="6.2" r="5.2" fill="url(#lg139_441)" stroke="#444" stroke-width="0.8"/></svg>
<div class="t" style="left:149.00px;top:436.57px;font-size:10.20px;color:#3a3a3a;">ER</div>
<div class="t" style="left:30.50px;top:439.96px;font-size:9.50px;">Connect Speed</div>
<div class="a" style="left:8px;top:453.5px;width:116px;height:48.5px;background:linear-gradient(100deg,#ffffff,#fdf0dc 50%,#f8d8a8);border:1.2px solid #e8b858"></div>
<div class="a" style="left:26.5px;top:455px;width:1px;height:6px;background:#c8a030"></div>
<div class="a" style="left:65.5px;top:455px;width:1px;height:6px;background:#c8a030"></div>
<div class="a" style="left:85px;top:455px;width:1px;height:6px;background:#c8a030"></div>
<div class="a" style="left:104.5px;top:455px;width:1px;height:6px;background:#c8a030"></div>
<svg class="a" style="left:42px;top:455px;" width="9" height="8" viewBox="0 0 9 8"><path d="M0 0 H8.5 L4.25 7.5Z" fill="#8a2a10"/></svg>
<div class="t" style="left:24.00px;top:463.45px;font-size:10.34px;font-weight:bold;color:#8a1a10;transform:scaleX(0.959);transform-origin:0 0;">0</div>
<div class="t" style="left:57.00px;top:463.45px;font-size:10.34px;font-weight:bold;color:#8a1a10;transform:scaleX(1.015);transform-origin:0 0;">500</div>
<div class="t" style="left:94.00px;top:463.45px;font-size:10.34px;font-weight:bold;color:#8a1a10;transform:scaleX(0.935);transform-origin:0 0;">1000</div>
<div class="a" style="left:26.5px;top:474px;width:1px;height:5px;background:#d8b040"></div>
<div class="a" style="left:34px;top:474px;width:1px;height:5px;background:#d8b040"></div>
<div class="a" style="left:42px;top:474px;width:1px;height:5px;background:#d8b040"></div>
<div class="a" style="left:50px;top:474px;width:1px;height:5px;background:#d8b040"></div>
<div class="a" style="left:57.5px;top:474px;width:1px;height:5px;background:#d8b040"></div>
<div class="a" style="left:65.5px;top:474px;width:1px;height:5px;background:#d8b040"></div>
<div class="a" style="left:73px;top:474px;width:1px;height:5px;background:#d8b040"></div>
<div class="a" style="left:81px;top:474px;width:1px;height:5px;background:#d8b040"></div>
<div class="a" style="left:89px;top:474px;width:1px;height:5px;background:#d8b040"></div>
<div class="a" style="left:97px;top:474px;width:1px;height:5px;background:#d8b040"></div>
<div class="a" style="left:104.5px;top:474px;width:1px;height:5px;background:#d8b040"></div>
<svg class="a" style="left:98px;top:472px;" width="9" height="8" viewBox="0 0 9 8"><path d="M0 0 H8.5 L4.25 7.5Z" fill="#8a2a10"/></svg>
<div class="t" style="left:24.00px;top:480.15px;font-size:10.34px;font-weight:bold;color:#8a1a10;transform:scaleX(1.033);transform-origin:0 0;">0  20 40 60 80 100</div>
<div class="t" style="left:39.00px;top:506.22px;font-size:9.08px;transform:scaleX(1.000);transform-origin:0 0;">J1708/J1939</div>
<div class="t" style="left:19.00px;top:519.76px;font-size:9.50px;transform:scaleX(0.993);transform-origin:0 0;">NO RESTRICTIONS</div>
<div class="a" style="left:3.5px;top:537px;width:114px;height:104px;border:1px solid #dcdcdc"></div>
<div class="a" style="left:7px;top:531px;width:40px;height:9px;background:#f0f0f0"></div>
<div class="t" style="left:9.50px;top:532.10px;font-size:9.56px;">Adapter</div>
<div class="a" style="left:70px;top:537px;width:46px;height:15.5px;background:#e1e1e1;border:1px solid #c4c4c4"></div>
<div class="t" style="left:76.50px;top:540.32px;font-size:9.42px;">Change</div>
<div class="a" style="left:10.5px;top:555px;width:104.5px;height:83.5px;background:radial-gradient(ellipse at 50% 40%,#f6f6f6 20%,#e6e6e6 75%,#dcdcdc);border:1px solid #8a8a8a"></div>
<svg class="a" style="left:10.5px;top:555px;" width="105" height="84" viewBox="0 0 105 84"><defs><filter id="bl"><feGaussianBlur stdDeviation="3.2"/></filter></defs>
<g transform="translate(-10.5,-555)">
<path d="M34 610 Q62 598 92 610 L92 622 Q62 630 34 622Z" fill="#5a5a5a" filter="url(#bl)" opacity="0.85"/>
<path d="M34 573.5 H44 Q62 584 80 573.5 H91 Q94.5 573.5 94.5 577 Q91 592 95 608 Q95 613 91 613 H80 Q62 602 45 613 H33 Q30 613 30.5 609 Q34 592 30.5 577 Q30.5 573.5 34 573.5Z" fill="#1c1d1f"/>
<path d="M45 577 Q62 586 80 577" stroke="#1a5a62" stroke-width="1.4" fill="none"/>
<path d="M46 609 Q62 600 79 609" stroke="#2a9aa8" stroke-width="1.6" fill="none"/>
<path d="M33.5 584 Q36 594 33.5 604" stroke="#1f7f8a" stroke-width="1.5" fill="none"/>
<path d="M91.5 584 Q89 594 91.5 604" stroke="#1f7f8a" stroke-width="1.5" fill="none"/>
<rect x="49" y="582" width="26" height="17" fill="#23282c"/>
<rect x="53" y="586" width="17" height="1.5" fill="#9aa"/>
<rect x="49.5" y="590" width="25" height="5.5" fill="#e4e4e4"/>
<g fill="#bbb"><circle cx="52" cy="599.5" r="0.8"/><circle cx="57" cy="598.5" r="0.8"/><circle cx="62" cy="598" r="0.9"/><circle cx="67" cy="598.5" r="0.8"/><circle cx="72" cy="599.5" r="0.8"/></g>
</g></svg>
<div class="a" style="left:124px;top:450px;width:1px;height:280px;background:#dadada"></div>
<div class="a" style="left:187.5px;top:195px;width:1px;height:272px;background:#a0a0a0"></div>
<div class="a" style="left:187px;top:195.2px;width:46.5px;height:15.8px;background:#f0f0f0;border:1px solid #d9d9d9;border-right:none"></div>
<div class="t" style="left:190.50px;top:198.37px;font-size:10.20px;font-weight:bold;color:#1a1a2a;transform:scaleX(0.882);transform-origin:0 0;">GAUGES</div>
<div class="a" style="left:233.5px;top:195.2px;width:40.5px;height:15.8px;background:#f0f0f0;border:1px solid #d9d9d9;border-right:none"></div>
<div class="t" style="left:238.50px;top:198.37px;font-size:10.20px;font-weight:bold;color:#1a1a2a;transform:scaleX(0.897);transform-origin:0 0;">TEMPS</div>
<div class="a" style="left:274px;top:195.2px;width:35px;height:15.8px;background:#f0f0f0;border:1px solid #d9d9d9;border-right:none"></div>
<div class="t" style="left:279.00px;top:198.37px;font-size:10.20px;font-weight:bold;color:#1a1a2a;transform:scaleX(0.845);transform-origin:0 0;">DTCs</div>
<div class="a" style="left:309px;top:195.2px;width:51px;height:15.8px;background:#f0f0f0;border:1px solid #d9d9d9;border-right:none"></div>
<div class="t" style="left:313.00px;top:198.37px;font-size:10.20px;font-weight:bold;color:#1a1a2a;transform:scaleX(0.896);transform-origin:0 0;">MONITOR</div>
<div class="a" style="left:360px;top:195.2px;width:61.5px;height:15.8px;background:#f0f0f0;border:1px solid #d9d9d9;border-right:none"></div>
<div class="t" style="left:365.00px;top:198.37px;font-size:10.20px;font-weight:bold;color:#1a1a2a;transform:scaleX(0.874);transform-origin:0 0;">READINESS</div>
<div class="a" style="left:421.5px;top:195.2px;width:60.5px;height:15.8px;background:#f0f0f0;border:1px solid #d9d9d9;border-right:none"></div>
<div class="t" style="left:426.50px;top:198.37px;font-size:10.20px;font-weight:bold;color:#1a1a2a;transform:scaleX(0.909);transform-origin:0 0;">EMISSIONS</div>
<div class="a" style="left:482px;top:194px;width:35px;height:18px;background:#fff;border:1px solid #d9d9d9;border-bottom:none"></div>
<div class="t" style="left:487.50px;top:196.97px;font-size:10.20px;font-weight:bold;color:#1a1a1a;transform:scaleX(0.861);transform-origin:0 0;">TRIP</div>
<div class="a" style="left:517px;top:195.2px;width:33.4px;height:15.8px;background:#f0f0f0;border:1px solid #d9d9d9;border-right:none"></div>
<div class="t" style="left:521.00px;top:198.37px;font-size:10.20px;font-weight:bold;color:#1a1a2a;transform:scaleX(0.846);transform-origin:0 0;">FUEL</div>
<div class="a" style="left:550.4px;top:195.2px;width:54px;height:15.8px;background:#f0f0f0;border:1px solid #d9d9d9;border-right:none"></div>
<div class="t" style="left:555.00px;top:198.37px;font-size:10.20px;font-weight:bold;color:#1a1a2a;transform:scaleX(0.892);transform-origin:0 0;">J1939 LPG</div>
<div class="a" style="left:604.4px;top:195.2px;width:1px;height:16px;background:#d9d9d9"></div>
<div class="a" style="left:188px;top:211px;width:1172.5px;height:255.5px;border:1px solid #a8a8a8;border-right:1px solid #c4c4c4;border-top:1.5px solid #555;border-left:1.5px solid #a8a8a8"></div>
<div class="a" style="left:482.5px;top:211px;width:34px;height:1.5px;background:#fff"></div>
<div class="a" style="left:189px;top:467px;width:1172px;height:1px;background:#fafafa"></div>
<div class="a" style="left:204px;top:214.5px;width:61px;height:16px;background:#e1e1e1;border:1px solid #c8c8c8"></div>
<div class="t" style="left:222.20px;top:218.48px;font-size:9.36px;color:#333;transform:scaleX(0.844);transform-origin:0 0;">PRINT</div>
<div class="a" style="left:191.3px;top:237px;width:69.7px;height:69.8px;background:#fff"></div>
<svg class="a" style="left:191.3px;top:237px;" width="70" height="70" viewBox="0 0 70 70"><defs>
<radialGradient id="gb" cx="50%" cy="50%" r="50%"><stop offset="0.84" stop-color="#0a0a0a"/><stop offset="0.88" stop-color="#3a3a3a"/><stop offset="0.93" stop-color="#e0e0e0"/><stop offset="0.97" stop-color="#6a6a6a"/><stop offset="1" stop-color="#2a2a2a"/></radialGradient>
<linearGradient id="gf" x1="0" y1="0" x2="0" y2="1"><stop offset="0" stop-color="#8a8a8a"/><stop offset="0.44" stop-color="#3a3a3a"/><stop offset="0.45" stop-color="#050505"/><stop offset="1" stop-color="#181818"/></linearGradient>
<filter id="gs"><feGaussianBlur stdDeviation="1.5"/></filter>
</defs>
<ellipse cx="35" cy="67" rx="25" ry="2" fill="#bbb" filter="url(#gs)"/>
<circle cx="35" cy="33.5" r="32.5" fill="url(#gb)"/>
<circle cx="35" cy="33.5" r="28" fill="url(#gf)"/>
<g stroke="#3ac83a"><line x1="18.38" y1="50.12" x2="15.70" y2="52.80" stroke-width="1.1"/><line x1="15.99" y1="49.74" x2="14.24" y2="51.23" stroke-width="0.6"/><line x1="14.77" y1="48.19" x2="12.91" y2="49.55" stroke-width="0.6"/><line x1="13.68" y1="46.56" x2="11.72" y2="47.76" stroke-width="0.6"/><line x1="12.72" y1="44.85" x2="10.68" y2="45.89" stroke-width="0.6"/><line x1="11.90" y1="43.07" x2="9.78" y2="43.95" stroke-width="0.6"/><line x1="12.65" y1="40.76" x2="9.04" y2="41.94" stroke-width="1.1"/><line x1="10.69" y1="39.34" x2="8.45" y2="39.87" stroke-width="0.6"/><line x1="10.31" y1="37.41" x2="8.04" y2="37.77" stroke-width="0.6"/><line x1="10.08" y1="35.46" x2="7.78" y2="35.64" stroke-width="0.6"/><line x1="10.00" y1="33.50" x2="7.70" y2="33.50" stroke-width="0.6"/><line x1="10.08" y1="31.54" x2="7.78" y2="31.36" stroke-width="0.6"/><line x1="11.79" y1="29.82" x2="8.04" y2="29.23" stroke-width="1.1"/><line x1="10.69" y1="27.66" x2="8.45" y2="27.13" stroke-width="0.6"/><line x1="11.22" y1="25.77" x2="9.04" y2="25.06" stroke-width="0.6"/><line x1="11.90" y1="23.93" x2="9.78" y2="23.05" stroke-width="0.6"/><line x1="12.72" y1="22.15" x2="10.68" y2="21.11" stroke-width="0.6"/><line x1="13.68" y1="20.44" x2="11.72" y2="19.24" stroke-width="0.6"/><line x1="15.99" y1="19.69" x2="12.91" y2="17.45" stroke-width="1.1"/><line x1="15.99" y1="17.26" x2="14.24" y2="15.77" stroke-width="0.6"/><line x1="17.32" y1="15.82" x2="15.70" y2="14.20" stroke-width="0.6"/><line x1="18.76" y1="14.49" x2="17.27" y2="12.74" stroke-width="0.6"/><line x1="20.31" y1="13.27" x2="18.95" y2="11.41" stroke-width="0.6"/><line x1="21.94" y1="12.18" x2="20.74" y2="10.22" stroke-width="0.6"/><line x1="24.33" y1="12.56" x2="22.61" y2="9.18" stroke-width="1.1"/><line x1="25.43" y1="10.40" x2="24.55" y2="8.28" stroke-width="0.6"/><line x1="27.27" y1="9.72" x2="26.56" y2="7.54" stroke-width="0.6"/><line x1="29.16" y1="9.19" x2="28.63" y2="6.95" stroke-width="0.6"/><line x1="31.09" y1="8.81" x2="30.73" y2="6.54" stroke-width="0.6"/><line x1="33.04" y1="8.58" x2="32.86" y2="6.28" stroke-width="0.6"/><line x1="35.00" y1="10.00" x2="35.00" y2="6.20" stroke-width="1.1"/><line x1="36.96" y1="8.58" x2="37.14" y2="6.28" stroke-width="0.6"/><line x1="38.91" y1="8.81" x2="39.27" y2="6.54" stroke-width="0.6"/><line x1="40.84" y1="9.19" x2="41.37" y2="6.95" stroke-width="0.6"/><line x1="42.73" y1="9.72" x2="43.44" y2="7.54" stroke-width="0.6"/><line x1="44.57" y1="10.40" x2="45.45" y2="8.28" stroke-width="0.6"/><line x1="45.67" y1="12.56" x2="47.39" y2="9.18" stroke-width="1.1"/><line x1="48.06" y1="12.18" x2="49.26" y2="10.22" stroke-width="0.6"/><line x1="49.69" y1="13.27" x2="51.05" y2="11.41" stroke-width="0.6"/><line x1="51.24" y1="14.49" x2="52.73" y2="12.74" stroke-width="0.6"/><line x1="52.68" y1="15.82" x2="54.30" y2="14.20" stroke-width="0.6"/><line x1="54.01" y1="17.26" x2="55.76" y2="15.77" stroke-width="0.6"/><line x1="54.01" y1="19.69" x2="57.09" y2="17.45" stroke-width="1.1"/><line x1="56.32" y1="20.44" x2="58.28" y2="19.24" stroke-width="0.6"/><line x1="57.28" y1="22.15" x2="59.32" y2="21.11" stroke-width="0.6"/><line x1="58.10" y1="23.93" x2="60.22" y2="23.05" stroke-width="0.6"/><line x1="58.78" y1="25.77" x2="60.96" y2="25.06" stroke-width="0.6"/><line x1="59.31" y1="27.66" x2="61.55" y2="27.13" stroke-width="0.6"/><line x1="58.21" y1="29.82" x2="61.96" y2="29.23" stroke-width="1.1"/><line x1="59.92" y1="31.54" x2="62.22" y2="31.36" stroke-width="0.6"/><line x1="60.00" y1="33.50" x2="62.30" y2="33.50" stroke-width="0.6"/><line x1="59.92" y1="35.46" x2="62.22" y2="35.64" stroke-width="0.6"/><line x1="59.69" y1="37.41" x2="61.96" y2="37.77" stroke-width="0.6"/><line x1="59.31" y1="39.34" x2="61.55" y2="39.87" stroke-width="0.6"/><line x1="57.35" y1="40.76" x2="60.96" y2="41.94" stroke-width="1.1"/><line x1="58.10" y1="43.07" x2="60.22" y2="43.95" stroke-width="0.6"/><line x1="57.28" y1="44.85" x2="59.32" y2="45.89" stroke-width="0.6"/><line x1="56.32" y1="46.56" x2="58.28" y2="47.76" stroke-width="0.6"/><line x1="55.23" y1="48.19" x2="57.09" y2="49.55" stroke-width="0.6"/><line x1="54.01" y1="49.74" x2="55.76" y2="51.23" stroke-width="0.6"/><line x1="51.62" y1="50.12" x2="54.30" y2="52.80" stroke-width="1.1"/></g><rect x="19.56" y="45.94" width="4" height="2" fill="#3a9a3a" opacity="0.8"/><rect x="14.93" y="38.37" width="4" height="2" fill="#3a9a3a" opacity="0.8"/><rect x="14.23" y="29.53" width="4" height="2" fill="#3a9a3a" opacity="0.8"/><rect x="17.63" y="21.33" width="4" height="2" fill="#3a9a3a" opacity="0.8"/><rect x="24.37" y="15.57" width="4" height="2" fill="#3a9a3a" opacity="0.8"/><rect x="33.00" y="13.50" width="4" height="2" fill="#3a9a3a" opacity="0.8"/><rect x="41.63" y="15.57" width="4" height="2" fill="#3a9a3a" opacity="0.8"/><rect x="48.37" y="21.33" width="4" height="2" fill="#3a9a3a" opacity="0.8"/><rect x="51.77" y="29.53" width="4" height="2" fill="#3a9a3a" opacity="0.8"/><rect x="51.07" y="38.37" width="4" height="2" fill="#3a9a3a" opacity="0.8"/><rect x="46.44" y="45.94" width="4" height="2" fill="#3a9a3a" opacity="0.8"/>
<text x="27.5" y="52" font-size="6.5" fill="#3ab83a" font-family="Liberation Sans" font-weight="bold">TRP</text>
<rect x="30" y="53.5" width="10" height="1.5" fill="#2a8a2a"/>
<line x1="14" y1="22" x2="45" y2="41" stroke="#e02020" stroke-width="1.6"/>
<circle cx="35" cy="34.5" r="3" fill="#e03030" stroke="#eee" stroke-width="1"/>
</svg>
<div class="t" style="left:191.80px;top:328.68px;font-size:9.00px;color:#222;">NOTE: Not all PIDs</div>
<div class="t" style="left:191.80px;top:340.18px;font-size:9.00px;color:#222;">may be available</div>
<div class="t" style="left:191.80px;top:351.68px;font-size:9.00px;color:#222;">based on your ECM</div>
<div class="t" style="left:191.80px;top:362.98px;font-size:9.00px;color:#222;">configuration</div>
<div class="t" style="left:191.80px;top:388.18px;font-size:9.00px;color:#222;">Blue Background =</div>
<div class="t" style="left:191.80px;top:399.38px;font-size:9.00px;color:#222;">J1708/J1939</div>
<div class="t" style="left:191.80px;top:410.58px;font-size:9.00px;color:#222;">remainder are</div>
<div class="t" style="left:191.80px;top:421.78px;font-size:9.00px;color:#222;">J1939 Only</div>
<svg class="a" style="left:195px;top:355px;" width="57" height="57" viewBox="0 0 57 57"><circle cx="28.5" cy="28.5" r="24.8" fill="none" stroke="#ecec20" stroke-width="2.6" opacity="0.92"/><path d="M27 27 L27 40 L30 37 L33 43 L35 42 L32 36 L36 36Z" fill="#fff" stroke="#888" stroke-width="0.6" opacity="0.8"/></svg>
<div class="a" style="left:193px;top:443.5px;width:12px;height:11px;background:#fff;border:1px solid #444"></div>
<div class="t" style="left:207.50px;top:446.51px;font-size:9.08px;color:#222;">Short Report</div>
<div class="t" style="left:311.80px;top:447.63px;font-size:9.18px;color:#222;">Some applications have limited or no trip data. Use Reset Trip Data in Menu to clear (J1939</div>
<div class="a" style="left:281px;top:213.5px;width:1076.5px;height:228px;background:#fff;border:1px solid #a0a0a0;border-top:1px solid #888"></div>
<div class="a" style="left:282px;top:214.5px;width:1059px;height:17.5px;background:#fff"></div>
<div class="a" style="left:301.5px;top:214.5px;width:1px;height:17.5px;background:#ececec"></div>
<div class="a" style="left:329.5px;top:214.5px;width:1px;height:17.5px;background:#ececec"></div>
<div class="a" style="left:479px;top:214.5px;width:1px;height:17.5px;background:#ececec"></div>
<div class="a" style="left:526px;top:214.5px;width:1px;height:17.5px;background:#ececec"></div>
<div class="a" style="left:572.5px;top:214.5px;width:1px;height:17.5px;background:#ececec"></div>
<div class="a" style="left:659px;top:214.5px;width:1px;height:17.5px;background:#ececec"></div>
<div class="a" style="left:282px;top:231.5px;width:377px;height:1px;background:#f2f2f2"></div>
<div class="a" style="left:286px;top:218px;width:9.5px;height:9.5px;background:#fff;border:1px solid #505050"></div>
<div class="t" style="left:305.50px;top:218.03px;font-size:8.94px;color:#333;transform:scaleX(0.871);transform-origin:0 0;">SPN</div>
<div class="t" style="left:333.00px;top:218.15px;font-size:8.80px;color:#333;">Description</div>
<div class="t" style="left:482.00px;top:218.03px;font-size:8.94px;color:#333;transform:scaleX(0.944);transform-origin:0 0;">J1708</div>
<div class="t" style="left:529.00px;top:218.03px;font-size:8.94px;color:#333;transform:scaleX(0.985);transform-origin:0 0;">J1939</div>
<div class="t" style="left:576.50px;top:218.33px;font-size:8.59px;color:#333;">Scale</div>
<div class="a" style="left:282px;top:232px;width:1059px;height:209px;overflow:hidden">
<div class="a" style="left:0.5px;top:-0.6px;width:376.5px;height:14px;background:#cfdbf2"></div>
<div class="a" style="left:0px;top:13px;width:1059px;height:0.8px;background:#ececec"></div>
<div class="a" style="left:19.5px;top:-0.6px;width:1px;height:14px;background:#f0f0f0"></div>
<div class="a" style="left:47.5px;top:-0.6px;width:1px;height:14px;background:#f0f0f0"></div>
<div class="a" style="left:197px;top:-0.6px;width:1px;height:14px;background:#f0f0f0"></div>
<div class="a" style="left:244px;top:-0.6px;width:1px;height:14px;background:#f0f0f0"></div>
<div class="a" style="left:290.5px;top:-0.6px;width:1px;height:14px;background:#f0f0f0"></div>
<div class="a" style="left:4px;top:1.9px;width:9.5px;height:9.5px;background:#fff;border:1px solid #505050"></div>
<div class="t" style="left:23.50px;top:2.28px;font-size:9.00px;color:#222;">244</div>
<div class="t" style="left:51.00px;top:2.23px;font-size:9.06px;color:#222;">Trip Distance</div>
<div class="t" style="left:294.50px;top:2.28px;font-size:9.00px;color:#222;">mi</div>
<div class="a" style="left:0.5px;top:13.63px;width:376.5px;height:14px;background:#cfdbf2"></div>
<div class="a" style="left:0px;top:27.23px;width:1059px;height:0.8px;background:#ececec"></div>
<div class="a" style="left:19.5px;top:13.63px;width:1px;height:14px;background:#f0f0f0"></div>
<div class="a" style="left:47.5px;top:13.63px;width:1px;height:14px;background:#f0f0f0"></div>
<div class="a" style="left:197px;top:13.63px;width:1px;height:14px;background:#f0f0f0"></div>
<div class="a" style="left:244px;top:13.63px;width:1px;height:14px;background:#f0f0f0"></div>
<div class="a" style="left:290.5px;top:13.63px;width:1px;height:14px;background:#f0f0f0"></div>
<div class="a" style="left:4px;top:16.13px;width:9.5px;height:9.5px;background:#fff;border:1px solid #505050"></div>
<div class="t" style="left:23.50px;top:16.51px;font-size:9.00px;color:#222;">182</div>
<div class="t" style="left:51.00px;top:16.46px;font-size:9.06px;color:#222;">Engine Trip Fuel</div>
<div class="t" style="left:247.00px;top:16.51px;font-size:9.00px;color:#222;">45764.26</div>
<div class="t" style="left:294.50px;top:16.51px;font-size:9.00px;color:#222;">Gal.</div>
<div class="a" style="left:0px;top:41.46px;width:1059px;height:0.8px;background:#ececec"></div>
<div class="a" style="left:19.5px;top:27.86px;width:1px;height:14px;background:#f0f0f0"></div>
<div class="a" style="left:47.5px;top:27.86px;width:1px;height:14px;background:#f0f0f0"></div>
<div class="a" style="left:197px;top:27.86px;width:1px;height:14px;background:#f0f0f0"></div>
<div class="a" style="left:244px;top:27.86px;width:1px;height:14px;background:#f0f0f0"></div>
<div class="a" style="left:290.5px;top:27.86px;width:1px;height:14px;background:#f0f0f0"></div>
<div class="a" style="left:4px;top:30.36px;width:9.5px;height:9.5px;background:#fff;border:1px solid #505050"></div>
<div class="t" style="left:23.50px;top:30.74px;font-size:9.00px;color:#222;">918</div>
<div class="t" style="left:51.00px;top:30.69px;font-size:9.06px;color:#222;">High Resolution Trip Distance</div>
<div class="t" style="left:247.00px;top:30.74px;font-size:9.00px;color:#222;">5103.0...</div>
<div class="t" style="left:294.50px;top:30.74px;font-size:9.00px;color:#222;">Miles</div>
<div class="a" style="left:0px;top:55.69px;width:1059px;height:0.8px;background:#ececec"></div>
<div class="a" style="left:19.5px;top:42.09px;width:1px;height:14px;background:#f0f0f0"></div>
<div class="a" style="left:47.5px;top:42.09px;width:1px;height:14px;background:#f0f0f0"></div>
<div class="a" style="left:197px;top:42.09px;width:1px;height:14px;background:#f0f0f0"></div>
<div class="a" style="left:244px;top:42.09px;width:1px;height:14px;background:#f0f0f0"></div>
<div class="a" style="left:290.5px;top:42.09px;width:1px;height:14px;background:#f0f0f0"></div>
<div class="a" style="left:4px;top:44.59px;width:9.5px;height:9.5px;background:#fff;border:1px solid #505050"></div>
<div class="t" style="left:23.50px;top:44.97px;font-size:9.00px;color:#222;">990</div>
<div class="t" style="left:51.00px;top:44.92px;font-size:9.06px;color:#222;">Total Compression Brake Distance</div>
<div class="t" style="left:294.50px;top:44.97px;font-size:9.00px;color:#222;">ft</div>
<div class="a" style="left:0px;top:69.92px;width:1059px;height:0.8px;background:#ececec"></div>
<div class="a" style="left:19.5px;top:56.32px;width:1px;height:14px;background:#f0f0f0"></div>
<div class="a" style="left:47.5px;top:56.32px;width:1px;height:14px;background:#f0f0f0"></div>
<div class="a" style="left:197px;top:56.32px;width:1px;height:14px;background:#f0f0f0"></div>
<div class="a" style="left:244px;top:56.32px;width:1px;height:14px;background:#f0f0f0"></div>
<div class="a" style="left:290.5px;top:56.32px;width:1px;height:14px;background:#f0f0f0"></div>
<div class="a" style="left:4px;top:58.82px;width:9.5px;height:9.5px;background:#fff;border:1px solid #505050"></div>
<div class="t" style="left:23.50px;top:59.20px;font-size:9.00px;color:#222;">993</div>
<div class="t" style="left:51.00px;top:59.15px;font-size:9.06px;color:#222;">Trip Service Brake Applications</div>
<div class="t" style="left:294.50px;top:59.20px;font-size:9.00px;color:#222;">times</div>
<div class="a" style="left:0px;top:84.15px;width:1059px;height:0.8px;background:#ececec"></div>
<div class="a" style="left:19.5px;top:70.55px;width:1px;height:14px;background:#f0f0f0"></div>
<div class="a" style="left:47.5px;top:70.55px;width:1px;height:14px;background:#f0f0f0"></div>
<div class="a" style="left:197px;top:70.55px;width:1px;height:14px;background:#f0f0f0"></div>
<div class="a" style="left:244px;top:70.55px;width:1px;height:14px;background:#f0f0f0"></div>
<div class="a" style="left:290.5px;top:70.55px;width:1px;height:14px;background:#f0f0f0"></div>
<div class="a" style="left:4px;top:73.05px;width:9.5px;height:9.5px;background:#fff;border:1px solid #505050"></div>
<div class="t" style="left:23.50px;top:73.43px;font-size:9.00px;color:#222;">1013</div>
<div class="t" style="left:51.00px;top:73.38px;font-size:9.06px;color:#222;">Trip Maximum Engine Speed</div>
<div class="t" style="left:294.50px;top:73.43px;font-size:9.00px;color:#222;">rpm</div>
<div class="a" style="left:0px;top:98.38px;width:1059px;height:0.8px;background:#ececec"></div>
<div class="a" style="left:19.5px;top:84.78px;width:1px;height:14px;background:#f0f0f0"></div>
<div class="a" style="left:47.5px;top:84.78px;width:1px;height:14px;background:#f0f0f0"></div>
<div class="a" style="left:197px;top:84.78px;width:1px;height:14px;background:#f0f0f0"></div>
<div class="a" style="left:244px;top:84.78px;width:1px;height:14px;background:#f0f0f0"></div>
<div class="a" style="left:290.5px;top:84.78px;width:1px;height:14px;background:#f0f0f0"></div>
<div class="a" style="left:4px;top:87.28px;width:9.5px;height:9.5px;background:#fff;border:1px solid #505050"></div>
<div class="t" style="left:23.50px;top:87.66px;font-size:9.00px;color:#222;">1014</div>
<div class="t" style="left:51.00px;top:87.61px;font-size:9.06px;color:#222;">Trip Average Engine Speed</div>
<div class="t" style="left:294.50px;top:87.66px;font-size:9.00px;color:#222;">rpm</div>
<div class="a" style="left:0px;top:112.61px;width:1059px;height:0.8px;background:#ececec"></div>
<div class="a" style="left:19.5px;top:99.01px;width:1px;height:14px;background:#f0f0f0"></div>
<div class="a" style="left:47.5px;top:99.01px;width:1px;height:14px;background:#f0f0f0"></div>
<div class="a" style="left:197px;top:99.01px;width:1px;height:14px;background:#f0f0f0"></div>
<div class="a" style="left:244px;top:99.01px;width:1px;height:14px;background:#f0f0f0"></div>
<div class="a" style="left:290.5px;top:99.01px;width:1px;height:14px;background:#f0f0f0"></div>
<div class="a" style="left:4px;top:101.51px;width:9.5px;height:9.5px;background:#fff;border:1px solid #505050"></div>
<div class="t" style="left:23.50px;top:101.89px;font-size:9.00px;color:#222;">1015</div>
<div class="t" style="left:51.00px;top:101.84px;font-size:9.06px;color:#222;">Trip Drive Average Load Factor</div>
<div class="t" style="left:294.50px;top:101.89px;font-size:9.00px;color:#222;">%</div>
<div class="a" style="left:0px;top:126.84px;width:1059px;height:0.8px;background:#ececec"></div>
<div class="a" style="left:19.5px;top:113.24px;width:1px;height:14px;background:#f0f0f0"></div>
<div class="a" style="left:47.5px;top:113.24px;width:1px;height:14px;background:#f0f0f0"></div>
<div class="a" style="left:197px;top:113.24px;width:1px;height:14px;background:#f0f0f0"></div>
<div class="a" style="left:244px;top:113.24px;width:1px;height:14px;background:#f0f0f0"></div>
<div class="a" style="left:290.5px;top:113.24px;width:1px;height:14px;background:#f0f0f0"></div>
<div class="a" style="left:4px;top:115.74px;width:9.5px;height:9.5px;background:#fff;border:1px solid #505050"></div>
<div class="t" style="left:23.50px;top:116.12px;font-size:9.00px;color:#222;">1018</div>
<div class="t" style="left:51.00px;top:116.07px;font-size:9.06px;color:#222;">Trip Maximum Vehicle Speed</div>
<div class="t" style="left:294.50px;top:116.12px;font-size:9.00px;color:#222;">mph</div>
<div class="a" style="left:0px;top:141.07px;width:1059px;height:0.8px;background:#ececec"></div>
<div class="a" style="left:19.5px;top:127.47px;width:1px;height:14px;background:#f0f0f0"></div>
<div class="a" style="left:47.5px;top:127.47px;width:1px;height:14px;background:#f0f0f0"></div>
<div class="a" style="left:197px;top:127.47px;width:1px;height:14px;background:#f0f0f0"></div>
<div class="a" style="left:244px;top:127.47px;width:1px;height:14px;background:#f0f0f0"></div>
<div class="a" style="left:290.5px;top:127.47px;width:1px;height:14px;background:#f0f0f0"></div>
<div class="a" style="left:4px;top:129.97px;width:9.5px;height:9.5px;background:#fff;border:1px solid #505050"></div>
<div class="t" style="left:23.50px;top:130.35px;font-size:9.00px;color:#222;">1019</div>
<div class="t" style="left:51.00px;top:130.30px;font-size:9.06px;color:#222;">Trip Cruise Distance</div>
<div class="t" style="left:294.50px;top:130.35px;font-size:9.00px;color:#222;">mi</div>
<div class="a" style="left:0px;top:155.3px;width:1059px;height:0.8px;background:#ececec"></div>
<div class="a" style="left:19.5px;top:141.7px;width:1px;height:14px;background:#f0f0f0"></div>
<div class="a" style="left:47.5px;top:141.7px;width:1px;height:14px;background:#f0f0f0"></div>
<div class="a" style="left:197px;top:141.7px;width:1px;height:14px;background:#f0f0f0"></div>
<div class="a" style="left:244px;top:141.7px;width:1px;height:14px;background:#f0f0f0"></div>
<div class="a" style="left:290.5px;top:141.7px;width:1px;height:14px;background:#f0f0f0"></div>
<div class="a" style="left:4px;top:144.2px;width:9.5px;height:9.5px;background:#fff;border:1px solid #505050"></div>
<div class="t" style="left:23.50px;top:144.58px;font-size:9.00px;color:#222;">1020</div>
<div class="t" style="left:51.00px;top:144.53px;font-size:9.06px;color:#222;">Trip Number of Hot Shutdowns</div>
<div class="t" style="left:294.50px;top:144.58px;font-size:9.00px;color:#222;">count</div>
<div class="a" style="left:0px;top:169.53px;width:1059px;height:0.8px;background:#ececec"></div>
<div class="a" style="left:19.5px;top:155.93px;width:1px;height:14px;background:#f0f0f0"></div>
<div class="a" style="left:47.5px;top:155.93px;width:1px;height:14px;background:#f0f0f0"></div>
<div class="a" style="left:197px;top:155.93px;width:1px;height:14px;background:#f0f0f0"></div>
<div class="a" style="left:244px;top:155.93px;width:1px;height:14px;background:#f0f0f0"></div>
<div class="a" style="left:290.5px;top:155.93px;width:1px;height:14px;background:#f0f0f0"></div>
<div class="a" style="left:4px;top:158.43px;width:9.5px;height:9.5px;background:#fff;border:1px solid #505050"></div>
<div class="t" style="left:23.50px;top:158.81px;font-size:9.00px;color:#222;">1021</div>
<div class="t" style="left:51.00px;top:158.76px;font-size:9.06px;color:#222;">Trip Number of Idle Shutdowns</div>
<div class="t" style="left:294.50px;top:158.81px;font-size:9.00px;color:#222;">count</div>
<div class="a" style="left:0px;top:183.76px;width:1059px;height:0.8px;background:#ececec"></div>
<div class="a" style="left:19.5px;top:170.16px;width:1px;height:14px;background:#f0f0f0"></div>
<div class="a" style="left:47.5px;top:170.16px;width:1px;height:14px;background:#f0f0f0"></div>
<div class="a" style="left:197px;top:170.16px;width:1px;height:14px;background:#f0f0f0"></div>
<div class="a" style="left:244px;top:170.16px;width:1px;height:14px;background:#f0f0f0"></div>
<div class="a" style="left:290.5px;top:170.16px;width:1px;height:14px;background:#f0f0f0"></div>
<div class="a" style="left:4px;top:172.66px;width:9.5px;height:9.5px;background:#fff;border:1px solid #505050"></div>
<div class="t" style="left:23.50px;top:173.04px;font-size:9.00px;color:#222;">1022</div>
<div class="t" style="left:51.00px;top:172.99px;font-size:9.06px;color:#222;">Trip Number of Idle Shutdown O...</div>
<div class="t" style="left:294.50px;top:173.04px;font-size:9.00px;color:#222;">count</div>
<div class="a" style="left:0px;top:197.99px;width:1059px;height:0.8px;background:#ececec"></div>
<div class="a" style="left:19.5px;top:184.39px;width:1px;height:14px;background:#f0f0f0"></div>
<div class="a" style="left:47.5px;top:184.39px;width:1px;height:14px;background:#f0f0f0"></div>
<div class="a" style="left:197px;top:184.39px;width:1px;height:14px;background:#f0f0f0"></div>
<div class="a" style="left:244px;top:184.39px;width:1px;height:14px;background:#f0f0f0"></div>
<div class="a" style="left:290.5px;top:184.39px;width:1px;height:14px;background:#f0f0f0"></div>
<div class="a" style="left:4px;top:186.89px;width:9.5px;height:9.5px;background:#fff;border:1px solid #505050"></div>
<div class="t" style="left:23.50px;top:187.27px;font-size:9.00px;color:#222;">1023</div>
<div class="t" style="left:51.00px;top:187.22px;font-size:9.06px;color:#222;">Trip Sudden Decelerations</div>
<div class="t" style="left:294.50px;top:187.27px;font-size:9.00px;color:#222;">count</div>
<div class="a" style="left:0px;top:212.22px;width:1059px;height:0.8px;background:#ececec"></div>
<div class="a" style="left:19.5px;top:198.62px;width:1px;height:14px;background:#f0f0f0"></div>
<div class="a" style="left:47.5px;top:198.62px;width:1px;height:14px;background:#f0f0f0"></div>
<div class="a" style="left:197px;top:198.62px;width:1px;height:14px;background:#f0f0f0"></div>
<div class="a" style="left:244px;top:198.62px;width:1px;height:14px;background:#f0f0f0"></div>
<div class="a" style="left:290.5px;top:198.62px;width:1px;height:14px;background:#f0f0f0"></div>
<div class="a" style="left:4px;top:201.12px;width:9.5px;height:9.5px;background:#fff;border:1px solid #505050"></div>
<div class="t" style="left:23.50px;top:201.50px;font-size:9.00px;color:#222;">1024</div>
<div class="t" style="left:51.00px;top:201.45px;font-size:9.06px;color:#222;">Trip Time in VSL</div>
<div class="t" style="left:294.50px;top:201.50px;font-size:9.00px;color:#222;">Hours</div>
</div>
<div class="a" style="left:1342px;top:214.5px;width:15px;height:226.5px;background:#f0f0f0"></div>
<div class="a" style="left:1342.5px;top:230px;width:13px;height:54px;background:#cdcdcd"></div>
<svg class="a" style="left:1343.5px;top:218px;" width="10" height="8" viewBox="0 0 10 8"><polyline points="1.5,5.75 5,2.25 8.5,5.75" fill="none" stroke="#555" stroke-width="1.3"/></svg>
<svg class="a" style="left:1343.5px;top:429px;" width="10" height="8" viewBox="0 0 10 8"><polyline points="1.5,2.25 5,5.75 8.5,2.25" fill="none" stroke="#555" stroke-width="1.3"/></svg>
<div class="a" style="left:124.5px;top:476.5px;width:1238px;height:251px;border:1px solid #dcdcdc;border-left:none"></div>
<div class="a" style="left:128.5px;top:471px;width:518px;height:12px;background:#f0f0f0"></div>
<div class="t" style="left:130.50px;top:472.25px;font-size:9.39px;color:#1a1a1a;">Move the mouse cursor over the chart and see detail, click on marker for marker value. Available on Chart style 2 and 3 only</div>
<div class="a" style="left:132px;top:486px;width:1015px;height:237.5px;background:#fff"></div>
<svg class="a" style="left:0px;top:0px;pointer-events:none" width="1366" height="768" viewBox="0 0 1366 768"><rect x="191" y="503" width="875.6" height="27.6" fill="#e9e9e9"/><rect x="191" y="558.2" width="875.6" height="27.6" fill="#e9e9e9"/><rect x="191" y="613.4" width="875.6" height="27.6" fill="#e9e9e9"/><rect x="191" y="668.6" width="875.6" height="27.6" fill="#e9e9e9"/><line x1="191" y1="696.2" x2="1066.6" y2="696.2" stroke="#dcdcdc" stroke-width="1"/><line x1="191" y1="668.6" x2="1066.6" y2="668.6" stroke="#dcdcdc" stroke-width="1"/><line x1="191" y1="641" x2="1066.6" y2="641" stroke="#dcdcdc" stroke-width="1"/><line x1="191" y1="613.4" x2="1066.6" y2="613.4" stroke="#dcdcdc" stroke-width="1"/><line x1="191" y1="585.8" x2="1066.6" y2="585.8" stroke="#dcdcdc" stroke-width="1"/><line x1="191" y1="558.2" x2="1066.6" y2="558.2" stroke="#dcdcdc" stroke-width="1"/><line x1="191" y1="530.6" x2="1066.6" y2="530.6" stroke="#dcdcdc" stroke-width="1"/><line x1="191" y1="503" x2="1066.6" y2="503" stroke="#dcdcdc" stroke-width="1"/><line x1="227.48" y1="495.6" x2="227.48" y2="715.2" stroke="#dadada" stroke-width="1"/><line x1="263.97" y1="495.6" x2="263.97" y2="715.2" stroke="#dadada" stroke-width="1"/><line x1="300.45" y1="495.6" x2="300.45" y2="715.2" stroke="#dadada" stroke-width="1"/><line x1="336.93" y1="495.6" x2="336.93" y2="715.2" stroke="#dadada" stroke-width="1"/><line x1="373.42" y1="495.6" x2="373.42" y2="715.2" stroke="#dadada" stroke-width="1"/><line x1="409.90" y1="495.6" x2="409.90" y2="715.2" stroke="#dadada" stroke-width="1"/><line x1="446.38" y1="495.6" x2="446.38" y2="715.2" stroke="#dadada" stroke-width="1"/><line x1="482.87" y1="495.6" x2="482.87" y2="715.2" stroke="#dadada" stroke-width="1"/><line x1="519.35" y1="495.6" x2="519.35" y2="715.2" stroke="#dadada" stroke-width="1"/><line x1="555.83" y1="495.6" x2="555.83" y2="715.2" stroke="#dadada" stroke-width="1"/><line x1="592.32" y1="495.6" x2="592.32" y2="715.2" stroke="#dadada" stroke-width="1"/><line x1="628.80" y1="495.6" x2="628.80" y2="715.2" stroke="#dadada" stroke-width="1"/><line x1="665.28" y1="495.6" x2="665.28" y2="715.2" stroke="#dadada" stroke-width="1"/><line x1="701.77" y1="495.6" x2="701.77" y2="715.2" stroke="#dadada" stroke-width="1"/><line x1="738.25" y1="495.6" x2="738.25" y2="715.2" stroke="#dadada" stroke-width="1"/><line x1="774.73" y1="495.6" x2="774.73" y2="715.2" stroke="#dadada" stroke-width="1"/><line x1="811.22" y1="495.6" x2="811.22" y2="715.2" stroke="#dadada" stroke-width="1"/><line x1="847.70" y1="495.6" x2="847.70" y2="715.2" stroke="#dadada" stroke-width="1"/><line x1="884.18" y1="495.6" x2="884.18" y2="715.2" stroke="#dadada" stroke-width="1"/><line x1="920.67" y1="495.6" x2="920.67" y2="715.2" stroke="#dadada" stroke-width="1"/><line x1="957.15" y1="495.6" x2="957.15" y2="715.2" stroke="#dadada" stroke-width="1"/><line x1="993.63" y1="495.6" x2="993.63" y2="715.2" stroke="#dadada" stroke-width="1"/><line x1="1030.12" y1="495.6" x2="1030.12" y2="715.2" stroke="#dadada" stroke-width="1"/><rect x="191" y="495.6" width="875.6" height="219.6" fill="none" stroke="#d8d8d8" stroke-width="1"/><line x1="191" y1="495.6" x2="191" y2="715.2" stroke="#a0a0a0" stroke-width="1.5"/><line x1="191" y1="715.2" x2="1066.6" y2="715.2" stroke="#7a7a7a" stroke-width="1.5"/><line x1="186.5" y1="696.2" x2="191" y2="696.2" stroke="#777" stroke-width="1"/><line x1="186.5" y1="668.6" x2="191" y2="668.6" stroke="#777" stroke-width="1"/><line x1="186.5" y1="641" x2="191" y2="641" stroke="#777" stroke-width="1"/><line x1="186.5" y1="613.4" x2="191" y2="613.4" stroke="#777" stroke-width="1"/><line x1="186.5" y1="585.8" x2="191" y2="585.8" stroke="#777" stroke-width="1"/><line x1="186.5" y1="558.2" x2="191" y2="558.2" stroke="#777" stroke-width="1"/><line x1="186.5" y1="530.6" x2="191" y2="530.6" stroke="#777" stroke-width="1"/><line x1="186.5" y1="503" x2="191" y2="503" stroke="#777" stroke-width="1"/><polyline points="943.4,696.2 943.7,514.2 951.9,514.2 952.2,696.2 982.5,696.2 982.8,514.2 992.2,514.2 992.5,696.2 1012.8,696.2 1013.1,514.2 1019.1,514.2 1019.4,696.2 1024.0,696.2 1024.3,514.2 1038.1,514.2 1038.4,696.2" fill="none" stroke="#d8bc6a" stroke-width="1.1"/><polyline points="930.6,696.2 932.5,649 937,649 939,650 1066.6,650" fill="none" stroke="#5a5a5a" stroke-width="1.3"/><polyline points="973.8,696.2 975.5,688.2 1066.6,688.2" fill="none" stroke="#8a8a5a" stroke-width="1.3"/><line x1="191" y1="696.2" x2="1066.6" y2="696.2" stroke="#5a5a70" stroke-width="2"/></svg>
<div class="t" style="left:172.77px;top:693.77px;font-size:10.20px;color:#222;">0</div>
<div class="t" style="left:169.93px;top:666.17px;font-size:10.20px;color:#222;">20</div>
<div class="t" style="left:169.93px;top:638.57px;font-size:10.20px;color:#222;">40</div>
<div class="t" style="left:169.93px;top:610.97px;font-size:10.20px;color:#222;">60</div>
<div class="t" style="left:169.93px;top:583.37px;font-size:10.20px;color:#222;">80</div>
<div class="t" style="left:167.10px;top:555.77px;font-size:10.20px;color:#222;">100</div>
<div class="t" style="left:167.10px;top:528.17px;font-size:10.20px;color:#222;">120</div>
<div class="t" style="left:167.10px;top:500.57px;font-size:10.20px;color:#222;">140</div>
<div class="t" style="left:146.1px;top:632.5px;font-size:15.6px;color:#111;transform:rotate(-90deg);transform-origin:0 0">Percent</div>
<div class="a" style="left:1071px;top:491.5px;width:71px;height:105.5px;background:#fff;border:1px solid #e0e0e0"></div>
<div class="a" style="left:1078px;top:505.3px;width:19px;height:1px;background:#444"></div>
<div class="t" style="left:1101.00px;top:501.17px;font-size:9.60px;color:#222;">PID 110</div>
<div class="a" style="left:1078px;top:521.1px;width:19px;height:1px;background:#e0b8b0"></div>
<div class="t" style="left:1101.00px;top:516.97px;font-size:9.60px;color:#222;">PID 14</div>
<div class="a" style="left:1078px;top:536.9px;width:19px;height:1px;background:#55553a"></div>
<div class="t" style="left:1101.00px;top:532.77px;font-size:9.60px;color:#222;">PID 15</div>
<div class="a" style="left:1078px;top:552.7px;width:19px;height:1px;background:#d0a8d0"></div>
<div class="t" style="left:1101.00px;top:548.57px;font-size:9.60px;color:#222;">PID 16</div>
<div class="a" style="left:1078px;top:568.5px;width:19px;height:1px;background:#e0cc80"></div>
<div class="t" style="left:1101.00px;top:564.37px;font-size:9.60px;color:#222;">PID 17</div>
<div class="a" style="left:1078px;top:584.3px;width:19px;height:1px;background:#8aa4b4"></div>
<div class="t" style="left:1101.00px;top:580.17px;font-size:9.60px;color:#222;">PID 18</div>
<div class="a" style="left:1155px;top:482px;width:50.5px;height:19px;background:linear-gradient(#1a80e0,#3a9af0 50%,#70bcff);border:1px solid #5a8ac0;border-radius:10px"></div>
<div class="t" style="left:1165.80px;top:486.81px;font-size:10.61px;font-weight:bold;color:#fff;transform:scaleX(0.917);transform-origin:0 0;">On</div>
<svg class="a" style="left:1186px;top:481.5px;" width="20" height="20" viewBox="0 0 20 20"><defs><radialGradient id="kb2" cx="40%" cy="35%" r="65%"><stop offset="0" stop-color="#ffffff"/><stop offset="1" stop-color="#cfcfcf"/></radialGradient></defs><circle cx="10" cy="10" r="9.3" fill="url(#kb2)" stroke="#8a8a8a" stroke-width="0.9"/></svg>
<div class="a" style="left:1217.5px;top:482px;width:53.5px;height:19px;background:linear-gradient(#e8e8e8,#c8c8c8);border:1px solid #9a9a9a;border-radius:10px"></div>
<svg class="a" style="left:1217px;top:481.5px;" width="20" height="20" viewBox="0 0 20 20"><circle cx="10" cy="10" r="9.3" fill="url(#kb2)" stroke="#8a8a8a" stroke-width="0.9"/></svg>
<div class="t" style="left:1243.50px;top:486.81px;font-size:10.61px;font-weight:bold;color:#7a1010;transform:scaleX(0.824);transform-origin:0 0;">DSL</div>
<div class="a" style="left:1154.5px;top:503.5px;width:203px;height:17px;background:#e4e4e4;border:1px solid #b4b4b4"></div>
<svg class="a" style="left:1345px;top:508px;" width="10" height="8" viewBox="0 0 10 8"><polyline points="1.8,2.4 5,5.6 8.2,2.4" fill="none" stroke="#555" stroke-width="1"/></svg>
<div class="t" style="left:1157.30px;top:507.45px;font-size:10.34px;color:#222;transform:scaleX(0.922);transform-origin:0 0;">110 Engine Coolant Temperature</div>
<div class="a" style="left:1154.5px;top:524.8px;width:203px;height:17px;background:#e4e4e4;border:1px solid #b4b4b4"></div>
<svg class="a" style="left:1345px;top:529.3px;" width="10" height="8" viewBox="0 0 10 8"><polyline points="1.8,2.4 5,5.6 8.2,2.4" fill="none" stroke="#555" stroke-width="1"/></svg>
<div class="t" style="left:1157.30px;top:528.75px;font-size:10.34px;color:#222;transform:scaleX(0.887);transform-origin:0 0;">14 Entry Assist Motor Current</div>
<div class="a" style="left:1154.5px;top:546.1px;width:203px;height:17px;background:#e4e4e4;border:1px solid #b4b4b4"></div>
<svg class="a" style="left:1345px;top:550.6px;" width="10" height="8" viewBox="0 0 10 8"><polyline points="1.8,2.4 5,5.6 8.2,2.4" fill="none" stroke="#555" stroke-width="1"/></svg>
<div class="t" style="left:1157.30px;top:550.05px;font-size:10.34px;color:#222;transform:scaleX(0.899);transform-origin:0 0;">15 Fuel Supply Pump Inlet Pressure</div>
<div class="a" style="left:1154.5px;top:567.4px;width:203px;height:17px;background:#e4e4e4;border:1px solid #b4b4b4"></div>
<svg class="a" style="left:1345px;top:571.9px;" width="10" height="8" viewBox="0 0 10 8"><polyline points="1.8,2.4 5,5.6 8.2,2.4" fill="none" stroke="#555" stroke-width="1"/></svg>
<div class="t" style="left:1157.30px;top:571.35px;font-size:10.34px;color:#222;transform:scaleX(0.898);transform-origin:0 0;">16 Suction Side Fuel Filter Differential Press</div>
<div class="a" style="left:1154.5px;top:588.7px;width:203px;height:17px;background:#e4e4e4;border:1px solid #b4b4b4"></div>
<svg class="a" style="left:1345px;top:593.2px;" width="10" height="8" viewBox="0 0 10 8"><polyline points="1.8,2.4 5,5.6 8.2,2.4" fill="none" stroke="#555" stroke-width="1"/></svg>
<div class="t" style="left:1157.30px;top:592.65px;font-size:10.34px;color:#222;transform:scaleX(0.915);transform-origin:0 0;">17 Engine Oil Level Remote Reservoir</div>
<div class="a" style="left:1154.5px;top:610px;width:203px;height:17px;background:#e4e4e4;border:1px solid #b4b4b4"></div>
<svg class="a" style="left:1345px;top:614.5px;" width="10" height="8" viewBox="0 0 10 8"><polyline points="1.8,2.4 5,5.6 8.2,2.4" fill="none" stroke="#555" stroke-width="1"/></svg>
<div class="t" style="left:1157.30px;top:613.95px;font-size:10.34px;color:#222;transform:scaleX(0.913);transform-origin:0 0;">18 Extended Range Fuel Pressure</div>
<div class="a" style="left:0px;top:734.5px;width:1366px;height:15.5px;background:#e5ecf4"></div>
<div class="t" style="left:2.00px;top:739.21px;font-size:10.61px;color:#222;transform:scaleX(0.916);transform-origin:0 0;">Waiting for Messages.................</div>
<div class="a" style="left:1088.2px;top:735.5px;width:42.3px;height:16.5px;border:1px solid #b4c4d6"></div>
<div class="a" style="left:1132.3px;top:735.5px;width:49.7px;height:16.5px;border:1px solid #b4c4d6"></div>
<div class="a" style="left:1184px;top:735.5px;width:116px;height:16.5px;border:1px solid #b4c4d6"></div>
<div class="a" style="left:1348px;top:735px;width:18px;height:1px;background:#a8bccf"></div>
<div class="a" style="left:1286px;top:724px;width:63px;height:26px;background:#efefef"></div>
<div class="t" style="left:1089.80px;top:738.91px;font-size:10.61px;color:#222;transform:scaleX(0.905);transform-origin:0 0;">00:06:38</div>
<div class="t" style="left:1134.00px;top:738.91px;font-size:10.61px;color:#222;transform:scaleX(0.978);transform-origin:0 0;">Hardware</div>
<div class="t" style="left:1185.50px;top:738.91px;font-size:10.61px;color:#222;transform:scaleX(0.946);transform-origin:0 0;">Sending J1939</div>
<div class="a" style="left:0px;top:750px;width:1366px;height:18px;background:#000"></div>
</body></html>
